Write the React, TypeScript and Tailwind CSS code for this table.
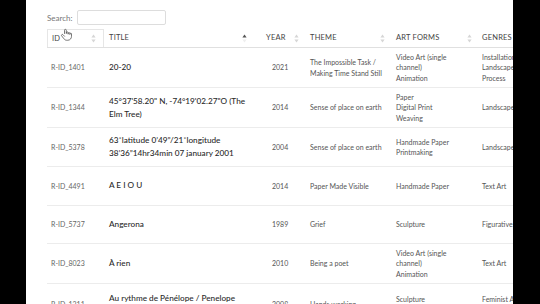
import React from "react";

type Row = {
  id: string;
  title: string[];
  year: string;
  theme: string;
  forms: string[];
  genres: string[];
  h: number;
};

const rows: Row[] = [
  { id: "R-ID_1401", title: ["20-20"], year: "2021", theme: "The Impossible Task / Making Time Stand Still", forms: ["Video Art (single channel)", "Animation"], genres: ["Installation", "Landscape", "Process"], h: 40 },
  { id: "R-ID_1344", title: ["45°37'58.20\" N, -74°19'02.27\"O (The Elm Tree)"], year: "2014", theme: "Sense of place on earth", forms: ["Paper", "Digital Print", "Weaving"], genres: ["Landscape"], h: 40 },
  { id: "R-ID_5378", title: ["63˚latitude 0’49”/21˚longitude 38’36”14hr34min 07 january 2001"], year: "2004", theme: "Sense of place on earth", forms: ["Handmade Paper", "Printmaking"], genres: ["Landscape"], h: 39 },
  { id: "R-ID_4491", title: ["A E I O U"], year: "2014", theme: "Paper Made Visible", forms: ["Handmade Paper"], genres: ["Text Art"], h: 38.5 },
  { id: "R-ID_5737", title: ["Angerona"], year: "1989", theme: "Grief", forms: ["Sculpture"], genres: ["Figurative"], h: 38.5 },
  { id: "R-ID_8023", title: ["À rien"], year: "2010", theme: "Being a poet", forms: ["Video Art (single channel)", "Animation"], genres: ["Text Art"], h: 40 },
  { id: "R-ID_1311", title: ["Au rythme de Pénélope / Penelope Weaves"], year: "2008", theme: "Hands working", forms: ["Sculpture", "Textile"], genres: ["Feminist Art", "Literary"], h: 42 },
];

function SortIcon({ active }: { active?: boolean }) {
  return (
    <svg width="5" height="9" viewBox="0 0 5 9">
      <polygon points="2.5,0.5 4.6,3.6 0.4,3.6" fill={active ? "#555" : "#d6d6d6"} />
      <polygon points="2.5,8.5 4.6,5.4 0.4,5.4" fill={active ? "#eeeeee" : "#d6d6d6"} />
    </svg>
  );
}

const cols = "grid grid-cols-[57px_149px_52px_86px_86px_110px]";

export default function App() {
  return (
    <div className="w-[540px] h-[304px] overflow-hidden bg-black flex" style={{ fontFamily: "Lato, 'Liberation Sans', sans-serif" }}>
      <div className="w-[26px] shrink-0 bg-black" />
      <div className="w-[487px] shrink-0 bg-white overflow-hidden relative pl-[21px] pt-[10px]">
        <div className="flex items-center gap-[4px] h-[15px]">
          <span className="text-[8px] text-[#777]">Search:</span>
          <div className="w-[89px] h-[15px] border border-[#dddddd] rounded-[2px]" />
        </div>
        <div className="w-[540px] mt-[4px]">
          <div className={`${cols} h-[19px] border-b border-[#e0e0e0] text-[7.5px] text-[#444] tracking-[0.2px]`}>
            <div className="flex items-center justify-between pl-[4px] pr-[7px] border border-b-0 border-[#e6e6e6]">
              <span>ID</span>
              <SortIcon />
            </div>
            <div className="flex items-center justify-between pl-[5px] pr-[6px]">
              <span>TITLE</span>
              <SortIcon active />
            </div>
            <div className="flex items-center justify-between pl-[13px] pr-[6px]">
              <span>YEAR</span>
              <SortIcon />
            </div>
            <div className="flex items-center justify-between pl-[5px] pr-[6px]">
              <span>THEME</span>
              <SortIcon />
            </div>
            <div className="flex items-center justify-between pl-[5px] pr-[5px]">
              <span>ART FORMS</span>
              <SortIcon />
            </div>
            <div className="flex items-center pl-[5px]">
              <span>GENRES</span>
            </div>
          </div>
          {rows.map((r) => (
            <div key={r.id} className={`${cols} border-b border-[#ececec]`} style={{ height: r.h }}>
              <div className="flex items-center pl-[4px] text-[7px] text-[#666]">{r.id}</div>
              <div className="flex items-center pl-[5px] pr-[6px] text-[8.2px] leading-[13px] font-medium text-[#2a2a2a]">
                <span>{r.title[0]}</span>
              </div>
              <div className="flex items-center pl-[19px] text-[7px] text-[#555]">{r.year}</div>
              <div className="flex items-center pl-[5px] pr-[8px] text-[7px] leading-[10.5px] text-[#555]">
                <span>{r.theme}</span>
              </div>
              <div className="flex flex-col justify-center pl-[5px] pr-[10px] text-[7px] leading-[10.5px] text-[#555]">
                {r.forms.map((f) => (
                  <div key={f}>{f}</div>
                ))}
              </div>
              <div className="flex flex-col justify-center pl-[5px] text-[7px] leading-[10.5px] text-[#555] whitespace-nowrap">
                {r.genres.map((g) => (
                  <div key={g}>{g}</div>
                ))}
              </div>
            </div>
          ))}
        </div>
        <svg className="absolute left-[34px] top-[28px]" width="12" height="13" viewBox="0 0 24 26">
          <path
            d="M9 11V4.5a1.8 1.8 0 0 1 3.6 0V11m0-1.5a1.8 1.8 0 0 1 3.6 0V12m0-1a1.8 1.8 0 0 1 3.6 0v1.5m0-.5a1.6 1.6 0 0 1 3.2 0v4.5c0 4.5-3 8-7.5 8h-2c-2.8 0-4.3-1.2-5.8-3.2L3.2 15.6a1.8 1.8 0 0 1 2.8-2.2L9 16.5"
            fill="#fff"
            stroke="#555"
            strokeWidth="1.6"
            strokeLinecap="round"
            strokeLinejoin="round"
          />
        </svg>
      </div>
      <div className="flex-1 bg-black" />
    </div>
  );
}
